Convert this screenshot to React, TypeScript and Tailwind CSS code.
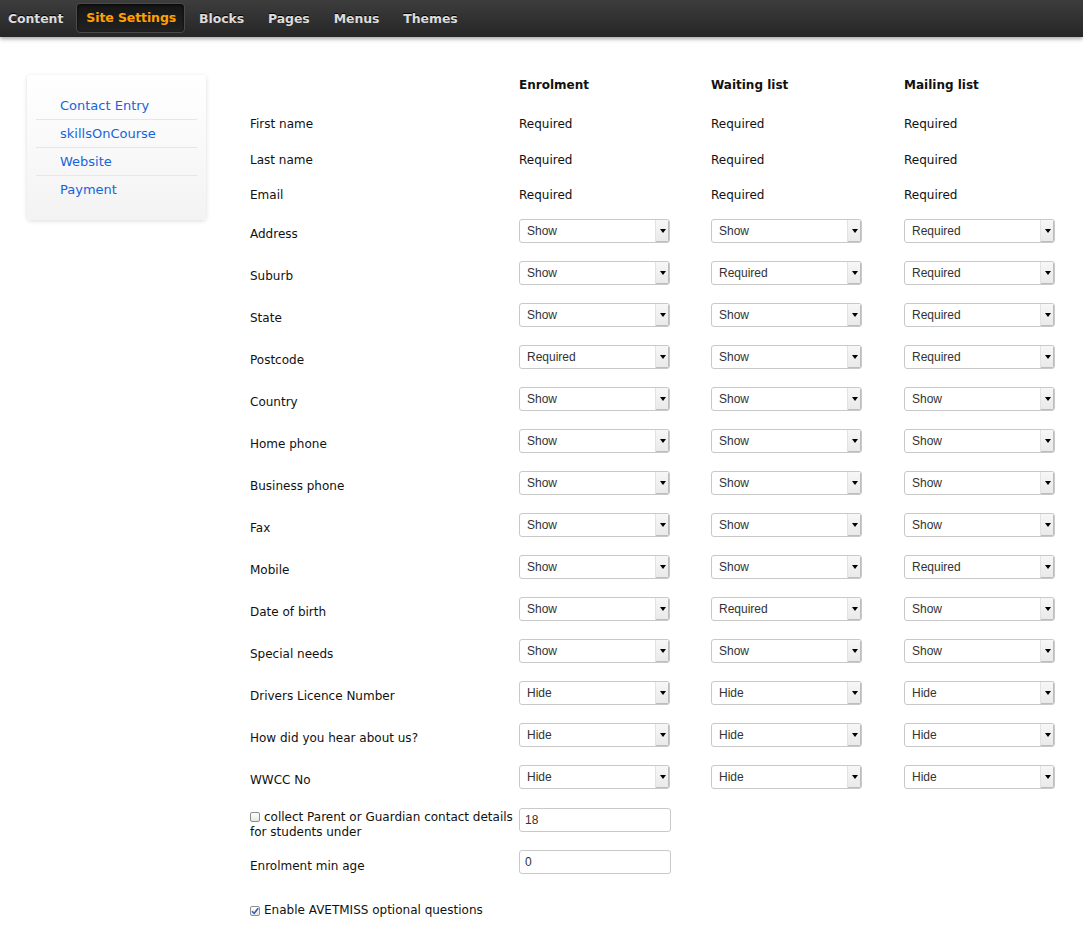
import { useState } from "react"

const navItems = ["Content", "Site Settings", "Blocks", "Pages", "Menus", "Themes"]
const sideLinks = ["Contact Entry", "skillsOnCourse", "Website", "Payment"]

const textRows = [
    { label: "First name", h: "h-[38px] pt-[2px]" },
    { label: "Last name", h: "h-[35px] pt-[1px]" },
    { label: "Email", h: "h-[32px] pt-[4px]" },
]

const selectRows: [string, string, string, string][] = [
    ["Address", "Show", "Show", "Required"],
    ["Suburb", "Show", "Required", "Required"],
    ["State", "Show", "Show", "Required"],
    ["Postcode", "Required", "Show", "Required"],
    ["Country", "Show", "Show", "Show"],
    ["Home phone", "Show", "Show", "Show"],
    ["Business phone", "Show", "Show", "Show"],
    ["Fax", "Show", "Show", "Show"],
    ["Mobile", "Show", "Show", "Required"],
    ["Date of birth", "Show", "Required", "Show"],
    ["Special needs", "Show", "Show", "Show"],
    ["Drivers Licence Number", "Hide", "Hide", "Hide"],
    ["How did you hear about us?", "Hide", "Hide", "Hide"],
    ["WWCC No", "Hide", "Hide", "Hide"],
]

// fake dropdown, native select renders too differently
const Dropdown = ({ value }: { value: string }) => (
    <div className="flex h-[24px] w-[151px] items-stretch overflow-hidden rounded-[3px] border border-[#c9c9c9] bg-white">
        <div className="flex flex-1 items-center pl-[7px] font-['Liberation_Sans',Arial,sans-serif] text-[12px] text-[#333]">
            {value}
        </div>
        <div className="flex w-[14px] items-center justify-center border-l border-[#e2e2e2] bg-gradient-to-b from-[#f7f7f7] to-[#e9e9e9] shadow-[inset_-1px_-1px_0_#bdbdbd]">
            <div className="h-0 w-0 border-x-[3px] border-t-[4px] border-x-transparent border-t-black" />
        </div>
    </div>
)

const TextBox = ({ value }: { value: string }) => (
    <div className="flex h-[24px] w-[152px] items-center rounded-[3px] border border-[#c9c9c9] bg-white pl-[5px] font-['Liberation_Sans',Arial,sans-serif] text-[12px] text-[#333]">
        {value}
    </div>
)

const Check = ({ checked }: { checked: boolean }) => (
    <span className="mr-[4px] inline-flex h-[10px] w-[10px] translate-y-[1px] items-center justify-center rounded-[2px] border border-[#8e8e8e] bg-gradient-to-b from-white to-[#e8e8e8] align-baseline">
        {checked && (
            <svg width="8" height="8" viewBox="0 0 8 8">
                <path d="M1 4.2 L3.2 6.4 L7.2 1.2" stroke="#2f5fb0" strokeWidth="1.6" fill="none" />
            </svg>
        )}
    </span>
)

export default function App() {
    const [active] = useState("Site Settings")

    return (
        <div className="min-h-[946px] bg-white font-['DejaVu_Sans',Verdana,sans-serif] text-[12px] text-[#111]">
            {/* top nav */}
            <div className="flex h-[37px] items-start gap-[4px] bg-gradient-to-b from-[#3d3d3d] to-[#262626] pt-[3px] shadow-[0_2px_4px_rgba(0,0,0,0.35)]">
                {navItems.map((item, i) => (
                    <div
                        key={item}
                        className={
                            item === active
                                ? "flex h-[30px] items-center rounded-[4px] border border-[#4a4a4a] bg-gradient-to-b from-[#161616] to-[#222] pl-[9px] pr-[8px] pt-[1px] text-[12.5px] font-bold tracking-[-0.1px] text-[#ffa200] shadow-[inset_0_1px_3px_rgba(0,0,0,0.8)]"
                                : `flex h-[30px] items-center ${i === 0 ? "pl-[8px] pr-[9px]" : "px-[10px]"} pt-[2px] text-[12.5px] font-bold tracking-[-0.1px] text-[#dcdcdc] [text-shadow:0_-1px_0_#000]`
                        }
                    >
                        {item}
                    </div>
                ))}
            </div>

            <div className="flex pl-[27px] pt-[38px]">
                {/* sidebar */}
                <div className="h-[145px] w-[179px] rounded-[4px] bg-gradient-to-b from-white to-[#f3f3f3] px-[9px] pt-[17px] shadow-[0_1px_4px_rgba(0,0,0,0.15)]">
                    {sideLinks.map((l, i) => (
                        <div
                            key={l}
                            className={`flex h-[28px] items-center pl-[24px] text-[13px] text-[#1664dc] ${i < sideLinks.length - 1 ? "border-b border-[#e6e6e6]" : ""}`}
                        >
                            {l}
                        </div>
                    ))}
                </div>

                {/* settings table */}
                <div className="ml-[44px] -mt-[9px]">
                    <div className="flex h-[38px] items-center font-bold">
                        <div className="w-[269px]" />
                        <div className="w-[192px]">Enrolment</div>
                        <div className="w-[193px]">Waiting list</div>
                        <div className="w-[160px]">Mailing list</div>
                    </div>

                    {textRows.map((r) => (
                        <div key={r.label} className={`flex ${r.h} items-center`}>
                            <div className="w-[269px]">{r.label}</div>
                            <div className="w-[192px]">Required</div>
                            <div className="w-[193px]">Required</div>
                            <div className="w-[160px]">Required</div>
                        </div>
                    ))}

                    {selectRows.map(([label, a, b, c]) => (
                        <div key={label} className="flex h-[42px] items-center pt-[1px]">
                            <div className="w-[269px] pt-[6px]">{label}</div>
                            <div className="w-[192px]">
                                <Dropdown value={a} />
                            </div>
                            <div className="w-[193px]">
                                <Dropdown value={b} />
                            </div>
                            <div className="w-[160px]">
                                <Dropdown value={c} />
                            </div>
                        </div>
                    ))}

                    <div className="mt-[11px] flex items-start">
                        <div className="w-[269px] pt-[2px] leading-[15px]">
                            <Check checked={false} />
                            collect Parent or Guardian contact details for students under
                        </div>
                        <TextBox value="18" />
                    </div>

                    <div className="mt-[9px] flex items-center">
                        <div className="w-[269px] pt-[8px]">Enrolment min age</div>
                        <TextBox value="0" />
                    </div>

                    <div className="mt-[28px] leading-[15px]">
                        <Check checked={true} />
                        Enable AVETMISS optional questions
                    </div>
                </div>
            </div>
        </div>
    )
}
